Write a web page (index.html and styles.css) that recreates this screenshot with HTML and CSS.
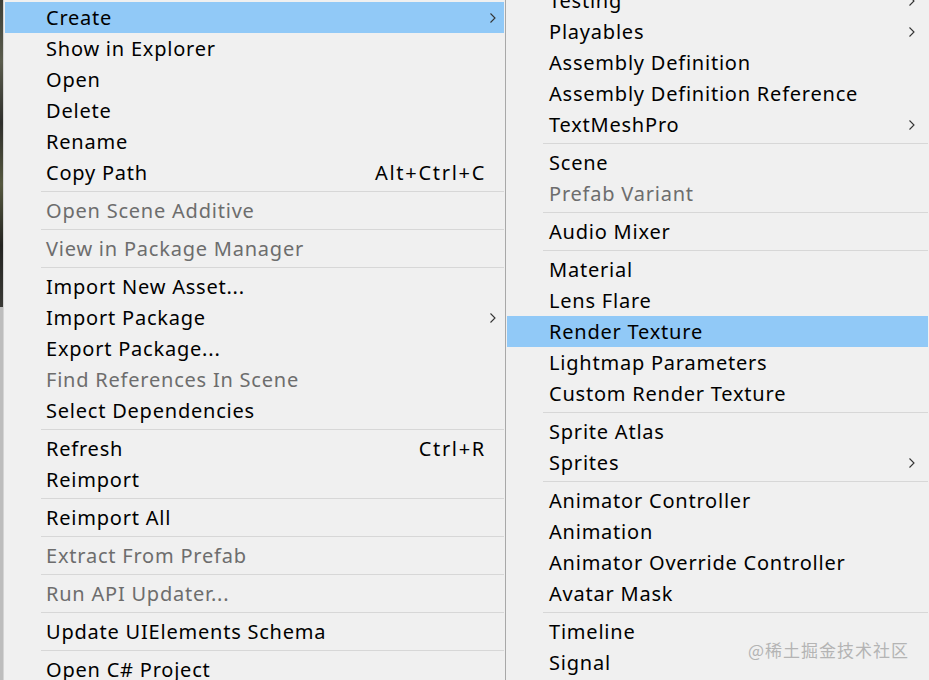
FILE: index.html
```html
<!DOCTYPE html>
<html>
<head>
<meta charset="utf-8">
<link rel="stylesheet" href="styles.css">
</head>
<body>
<div class="screen">
  <div class="strip"><div class="strip-dark"></div><div class="strip-light"></div></div>
  <div class="menu menu-left">
    <div class="item active"><span class="label">Create</span><svg class="chev" viewBox="0 0 6 10"><path d="M0.5 0.5 L5 5 L0.5 9.5"/></svg></div>
    <div class="item"><span class="label">Show in Explorer</span></div>
    <div class="item"><span class="label">Open</span></div>
    <div class="item"><span class="label">Delete</span></div>
    <div class="item"><span class="label">Rename</span></div>
    <div class="item"><span class="label">Copy Path</span><span class="key">Alt+Ctrl+C</span></div>
    <div class="sep"></div>
    <div class="item disabled"><span class="label">Open Scene Additive</span></div>
    <div class="sep"></div>
    <div class="item disabled"><span class="label">View in Package Manager</span></div>
    <div class="sep"></div>
    <div class="item"><span class="label">Import New Asset...</span></div>
    <div class="item"><span class="label">Import Package</span><svg class="chev" viewBox="0 0 6 10"><path d="M0.5 0.5 L5 5 L0.5 9.5"/></svg></div>
    <div class="item"><span class="label">Export Package...</span></div>
    <div class="item disabled"><span class="label">Find References In Scene</span></div>
    <div class="item"><span class="label">Select Dependencies</span></div>
    <div class="sep"></div>
    <div class="item"><span class="label">Refresh</span><span class="key">Ctrl+R</span></div>
    <div class="item"><span class="label">Reimport</span></div>
    <div class="sep"></div>
    <div class="item"><span class="label">Reimport All</span></div>
    <div class="sep"></div>
    <div class="item disabled"><span class="label">Extract From Prefab</span></div>
    <div class="sep"></div>
    <div class="item disabled"><span class="label">Run API Updater...</span></div>
    <div class="sep"></div>
    <div class="item"><span class="label">Update UIElements Schema</span></div>
    <div class="sep"></div>
    <div class="item"><span class="label">Open C# Project</span></div>
  </div>
  <div class="menu menu-right">
    <div class="item"><span class="label">Testing</span><svg class="chev" viewBox="0 0 6 10"><path d="M0.5 0.5 L5 5 L0.5 9.5"/></svg></div>
    <div class="item"><span class="label">Playables</span><svg class="chev" viewBox="0 0 6 10"><path d="M0.5 0.5 L5 5 L0.5 9.5"/></svg></div>
    <div class="item"><span class="label">Assembly Definition</span></div>
    <div class="item"><span class="label">Assembly Definition Reference</span></div>
    <div class="item"><span class="label">TextMeshPro</span><svg class="chev" viewBox="0 0 6 10"><path d="M0.5 0.5 L5 5 L0.5 9.5"/></svg></div>
    <div class="sep"></div>
    <div class="item"><span class="label">Scene</span></div>
    <div class="item disabled"><span class="label">Prefab Variant</span></div>
    <div class="sep"></div>
    <div class="item"><span class="label">Audio Mixer</span></div>
    <div class="sep"></div>
    <div class="item"><span class="label">Material</span></div>
    <div class="item"><span class="label">Lens Flare</span></div>
    <div class="item active"><span class="label">Render Texture</span></div>
    <div class="item"><span class="label">Lightmap Parameters</span></div>
    <div class="item"><span class="label">Custom Render Texture</span></div>
    <div class="sep"></div>
    <div class="item"><span class="label">Sprite Atlas</span></div>
    <div class="item"><span class="label">Sprites</span><svg class="chev" viewBox="0 0 6 10"><path d="M0.5 0.5 L5 5 L0.5 9.5"/></svg></div>
    <div class="sep"></div>
    <div class="item"><span class="label">Animator Controller</span></div>
    <div class="item"><span class="label">Animation</span></div>
    <div class="item"><span class="label">Animator Override Controller</span></div>
    <div class="item"><span class="label">Avatar Mask</span></div>
    <div class="sep"></div>
    <div class="item"><span class="label">Timeline</span></div>
    <div class="item"><span class="label">Signal</span></div>
  </div>
  <div class="watermark">@稀土掘金技术社区</div>
</div>
</body>
</html>
```
FILE: styles.css
```css
html, body {
  margin: 0;
  padding: 0;
  background: #f0f0f0;
}
.screen {
  position: relative;
  width: 929px;
  height: 680px;
  overflow: hidden;
  display: flex;
  align-items: flex-start;
  font-family: "Noto Sans", "Open Sans", sans-serif;
  font-size: 20px;
  letter-spacing: 0.78px;
  color: #000;
}
.strip {
  width: 3px;
  height: 680px;
  display: flex;
  flex-direction: column;
  flex: none;
}
.strip-dark {
  height: 307px;
  background: linear-gradient(#3d3f38, #5a5c4d 20%, #2f2f2c 40%, #55583f 60%, #242421 80%, #3a3a36);
}
.strip-light {
  flex: 1;
  background: #bdbdbd;
}
.menu {
  background: #f0f0f0;
  flex: none;
  display: flex;
  flex-direction: column;
}
.menu-left {
  width: 499px;
  padding: 2px 1px 0 1px;
  border-left: 1px solid #d4d4d4;
  border-right: 1px solid #a8a8a8;
}
.menu-right {
  width: 421px;
  padding: 0 1px 0 1px;
  margin-top: -15px;
}
.item {
  height: 31px;
  display: flex;
  align-items: center;
  position: relative;
  white-space: nowrap;
}
.menu-left .item { padding-left: 41px; }
.menu-right .item { padding-left: 42px; }
.item .label {
  flex: 1;
  line-height: 31px;
}
.item.active {
  background: #91c9f7;
}
.item.disabled {
  color: #6d6d6d;
}
.key {
  margin-right: 18px;
  line-height: 31px;
  letter-spacing: 1.7px;
}
.chev {
  width: 6px;
  height: 10px;
  fill: none;
  stroke: #333;
  stroke-width: 1.1;
  margin-right: 8px;
}
.menu-right .chev { margin-right: 13px; }
.sep {
  height: 7px;
  display: flex;
  align-items: center;
}
.sep::before {
  content: "";
  display: block;
  height: 1px;
  flex: 1;
  background: #d7d7d7;
}
.menu-left .sep { padding-left: 36px; }
.menu-right .sep { padding-left: 36px; }
.watermark {
  position: absolute;
  left: 748px;
  top: 637px;
  font-family: "Noto Sans CJK SC", sans-serif;
  font-size: 17px;
  color: #b4b4b4;
  letter-spacing: 1px;
}
```
